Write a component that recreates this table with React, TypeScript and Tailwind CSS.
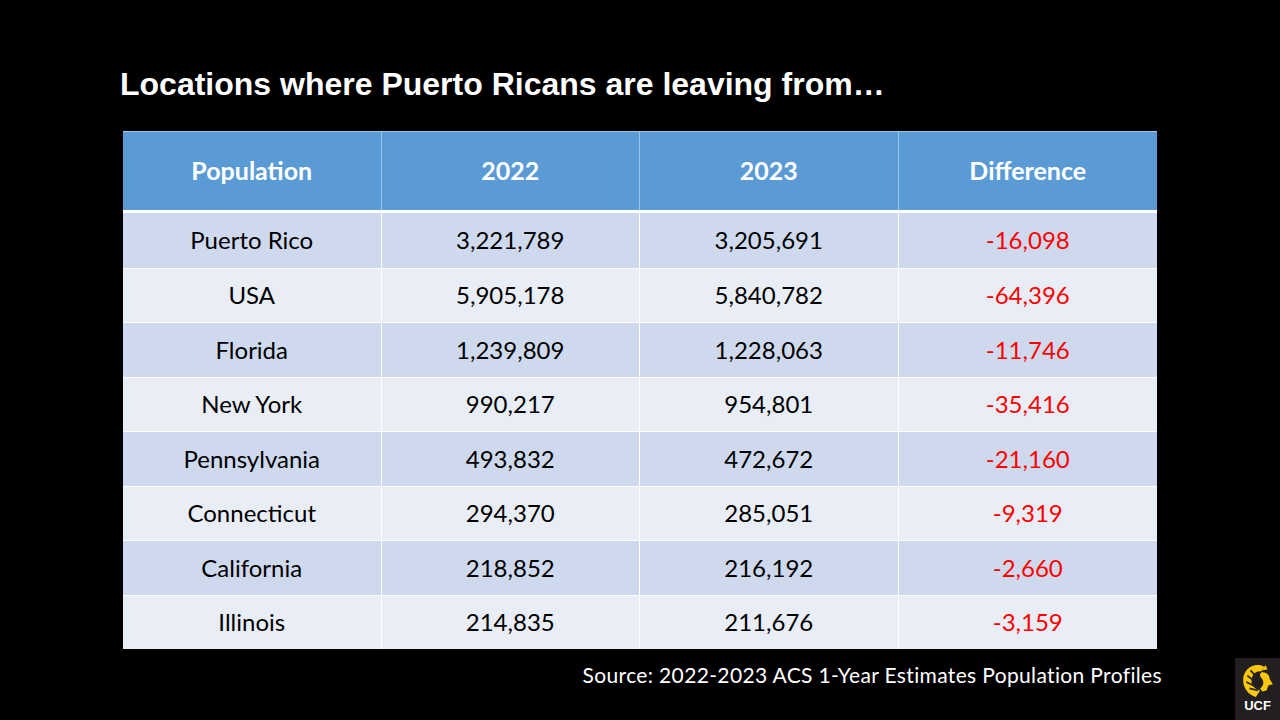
const rows = [
  ["Puerto Rico", "3,221,789", "3,205,691", "-16,098"],
  ["USA", "5,905,178", "5,840,782", "-64,396"],
  ["Florida", "1,239,809", "1,228,063", "-11,746"],
  ["New York", "990,217", "954,801", "-35,416"],
  ["Pennsylvania", "493,832", "472,672", "-21,160"],
  ["Connecticut", "294,370", "285,051", "-9,319"],
  ["California", "218,852", "216,192", "-2,660"],
  ["Illinois", "214,835", "211,676", "-3,159"],
];

const headers = ["Population", "2022", "2023", "Difference"];

const UcfLogo = () => (
  <div className="w-[45px] h-[62px] bg-[#231f20] flex flex-col items-center pt-[5px]">
    <svg width="34" height="36" viewBox="0 0 32 34">
      <path
        d="M16 2 C8 2 2 8 2 16 C2 24 7 30 14 32 L18 26 C12 24 9 20 10 15 C11 10 15 7 19 8 L22 4 C20 2.5 18 2 16 2 Z"
        fill="#f9c80e"
      />
      <path d="M6 12 L16 20 M5 18 L15 23 M8 24 L16 26 M9 7 L17 16" stroke="#231f20" strokeWidth="1.6" />
      <path
        d="M19 9 C23 8 27 11 27 15 L30 20 L26 21 L24 26 L20 27 L18 24 C21 22 22 18 20 15 C18 13 17 11 19 9 Z"
        fill="#f9c80e"
      />
      <path d="M20 7 L23 2 L25 6 Z" fill="#f9c80e" />
    </svg>
    <span className="text-white font-bold text-[13px] leading-none font-['Liberation_Sans',sans-serif]">
      UCF
    </span>
  </div>
);

export default function App() {
  return (
    <div className="w-[1280px] h-[720px] bg-black flex flex-col pt-[68px] pl-[120px] font-['Lato',sans-serif]">
      <h1 className="text-white font-bold text-[32px] leading-none font-['Liberation_Sans',sans-serif]">
        Locations where Puerto Ricans are leaving from…
      </h1>

      <div className="ml-[3px] mt-[31px] w-[1034px]">
        <div className="grid grid-cols-4 h-[79px] bg-[#5b9bd5] border-t border-[#9dc3e6]">
          {headers.map((h, i) => (
            <div
              key={h}
              className={
                "flex items-center justify-center text-white font-bold text-[25px] " +
                (i < 3 ? "border-r border-[#9dc3e6]" : "")
              }
            >
              {h}
            </div>
          ))}
        </div>
        <div className="h-[3px] bg-white" />
        {rows.map((r, ri) => (
          <div
            key={r[0]}
            className={
              "grid grid-cols-4 h-[54.5px] " +
              (ri % 2 === 0 ? "bg-[#cfd9ed]" : "bg-[#e9edf6]") +
              (ri > 0 ? " border-t border-white" : "")
            }
          >
            {r.map((c, ci) => (
              <div
                key={ci}
                className={
                  "flex items-center justify-center text-[24px] " +
                  (ci === 3 ? "text-[#ff0000]" : "text-black") +
                  (ci < 3 ? " border-r border-white" : "")
                }
              >
                {c}
              </div>
            ))}
          </div>
        ))}
      </div>

      <div className="flex-1 flex justify-end items-start">
        <span className="mt-[15px] mr-[73px] text-white text-[21px] tracking-[0.35px] leading-none">
          Source: 2022-2023 ACS 1-Year Estimates Population Profiles
        </span>
        <div className="self-end">
          <UcfLogo />
        </div>
      </div>
    </div>
  );
}
